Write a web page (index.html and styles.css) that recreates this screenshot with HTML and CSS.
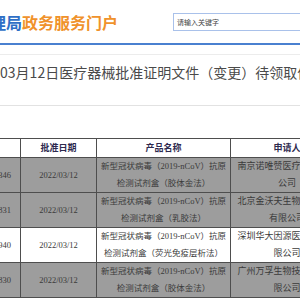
FILE: index.html
```html
<!DOCTYPE html>
<html lang="zh-CN">
<head>
  <meta charset="UTF-8">
  <title>医疗器械批准证明文件（变更）待领取信息</title>
  <link rel="stylesheet" href="styles.css">
</head>
<body>
  <div class="top">
    <div class="logo"><span class="blue">国家药品监督管理局</span><span class="orange">政务服务门户</span></div>
    <div class="search">请输入关键字</div>
  </div>
  <div class="nav"></div>
  <div class="title">2022年03月12日医疗器械批准证明文件（变更）待领取信息</div>

  <div class="list">
    <table>
      <colgroup>
        <col class="c0"><col class="c1"><col class="c2"><col class="c3">
      </colgroup>
      <tr class="head">
        <th>编号</th>
        <th>批准日期</th>
        <th>产品名称</th>
        <th>申请人</th>
      </tr>
      <tr class="grey">
        <td>CQZ2200346</td>
        <td>2022/03/12</td>
        <td>新型冠状病毒（2019-nCoV）抗原<br>检测试剂盒（胶体金法）</td>
        <td>南京诺唯赞医疗科技有限公司</td>
      </tr>
      <tr class="grey">
        <td>CQZ2200831</td>
        <td>2022/03/12</td>
        <td>新型冠状病毒（2019-nCoV）抗原<br>检测试剂盒（乳胶法）</td>
        <td>北京金沃夫生物工程科技有限公司</td>
      </tr>
      <tr>
        <td>CQZ2200940</td>
        <td>2022/03/12</td>
        <td>新型冠状病毒（2019-nCoV）抗原<br>检测试剂盒（荧光免疫层析法）</td>
        <td>深圳华大因源医药科技有限公司</td>
      </tr>
      <tr class="grey">
        <td>CQZ2200830</td>
        <td>2022/03/12</td>
        <td>新型冠状病毒（2019-nCoV）抗原<br>检测试剂盒（胶体金法）</td>
        <td>广州万孚生物技术股份有限公司</td>
      </tr>
    </table>
  </div>
</body>
</html>
```

FILE: styles.css
```css
html, body {
  overflow: hidden;
}
body {
  margin: 0;
  background: #fff;
  font-family: "Noto Sans CJK SC", sans-serif;
  color: #333;
}
.top {
  display: flex;
  align-items: center;
  height: 43px;
  border-bottom: 2px solid #4a80d0;
  white-space: nowrap;
}
.logo {
  flex-shrink: 0;
  margin-left: -122px;
  font-size: 16px;
  font-weight: bold;
  line-height: 20px;
}
.blue {
  color: #2f6fc6;
}
.orange {
  color: #f0922b;
}
.search {
  flex-shrink: 0;
  width: 200px;
  height: 16px;
  margin-left: 55px;
  margin-top: 1px;
  padding-left: 3px;
  border: 1px solid #a9c1ea;
  font-size: 7px;
  line-height: 16px;
  color: #444;
}
.nav {
  height: 9px;
  border-bottom: 1px solid #ececec;
}
.title {
  height: 42px;
  padding-top: 8px;
  margin-left: -45px;
  border-bottom: 1px solid #e2e2e2;
  font-size: 14px;
  line-height: 18px;
  color: #4a4a4a;
  white-space: nowrap;
}
.list {
  margin-top: 32px;
  overflow: hidden;
}
table {
  table-layout: fixed;
  width: 370px;
  margin-left: -46px;
  border-collapse: collapse;
  font-family: "Liberation Serif", "Noto Sans CJK SC", serif;
  font-size: 8.5px;
}
.c0 { width: 66px; }
.c1 { width: 76px; }
.c2 { width: 134px; }
.c3 { width: 113px; }
th, td {
  border: 1px solid #4e4e4e;
  padding: 0 4px;
  text-align: center;
  white-space: nowrap;
}
td:last-child {
  white-space: normal;
  font-size: 9px;
}
th {
  height: 18px;
  font-family: "Noto Sans CJK SC", sans-serif;
  font-size: 9px;
  font-weight: bold;
  color: #2e2a4f;
  line-height: 18px;
}
td {
  height: 34px;
  line-height: 17px;
  color: #3a3a3a;
}
td:nth-child(3) {
  padding: 0;
}
.grey td {
  background: #9d9d9d;
}
```
